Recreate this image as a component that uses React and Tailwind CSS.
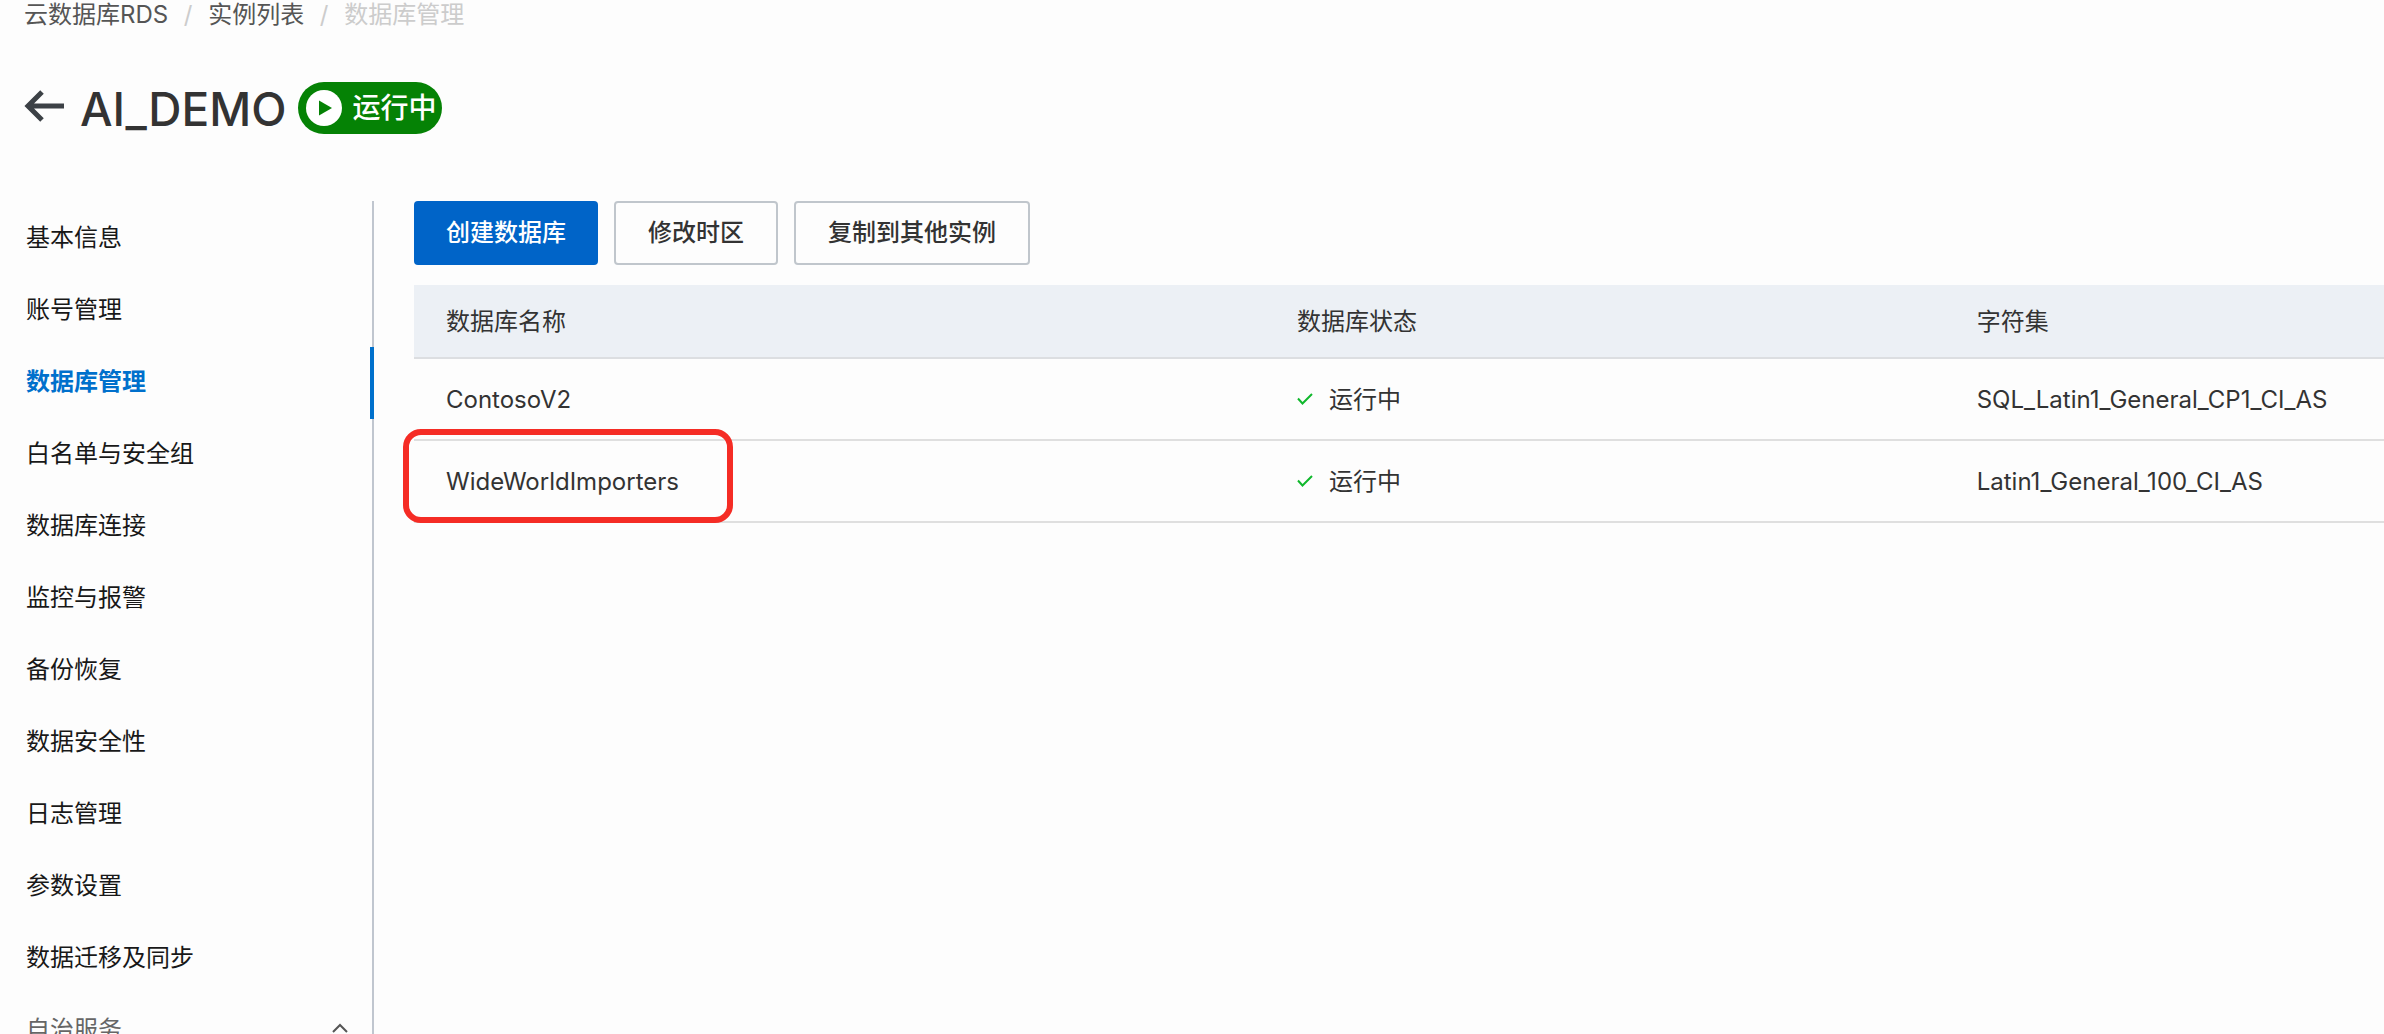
import { Fragment } from "react";

const breadcrumbs = ["云数据库RDS", "实例列表", "数据库管理"];

const menuItems = [
  "基本信息",
  "账号管理",
  "数据库管理",
  "白名单与安全组",
  "数据库连接",
  "监控与报警",
  "备份恢复",
  "数据安全性",
  "日志管理",
  "参数设置",
  "数据迁移及同步",
];

const databases = [
  { name: "ContosoV2", status: "运行中", charset: "SQL_Latin1_General_CP1_CI_AS" },
  {
    name: "WideWorldImporters",
    status: "运行中",
    charset: "Latin1_General_100_CI_AS",
    marked: true,
  },
];

function Breadcrumb() {
  return (
    <nav aria-label="breadcrumb" className="flex h-[30px] items-center px-6 text-[#555]">
      {breadcrumbs.map((label, index) => (
        <Fragment key={label}>
          {index > 0 && <span className="w-10 text-center text-[#ccc]">/</span>}
          {index < breadcrumbs.length - 1 ? (
            <a href="#">{label}</a>
          ) : (
            <span className="text-[#ccc]">{label}</span>
          )}
        </Fragment>
      ))}
    </nav>
  );
}

function InstanceHeader() {
  return (
    <header className="mt-[52px] flex h-[52px] items-center px-6">
      <button type="button" aria-label="返回" className="mr-4 flex h-9 w-10 items-start">
        <svg viewBox="0 0 40 32" className="h-8 w-10" fill="none" stroke="#3c4146" strokeWidth="5">
          <path d="M40 16H4M18 2L4 16l14 14" />
        </svg>
      </button>
      <h1 className="pt-0.5 text-[46px] leading-[52px] font-medium text-[#333]">AI_DEMO</h1>
      <span className="ml-3 flex h-[52px] items-center gap-2.5 rounded-full bg-[#058205] pr-1.5 pl-2 text-[28px] font-medium text-white">
        <svg viewBox="0 0 36 36" className="size-9">
          <circle cx="18" cy="18" r="18" fill="#fff" />
          <path d="M13 10.5L26 18L13 25.5z" fill="#058205" />
        </svg>
        运行中
      </span>
    </header>
  );
}

function SideMenu() {
  return (
    <aside className="w-[374px] shrink-0 border-r-2 border-[#c0c6cf] pt-0.5">
      {menuItems.map((label) =>
        label === "数据库管理" ? (
          <a
            key={label}
            href="#"
            className="-mr-0.5 flex h-[72px] items-center border-r-4 border-[#0070cc] pb-0.5 pl-[26px] font-semibold text-[#0070cc]"
          >
            {label}
          </a>
        ) : (
          <a
            key={label}
            href="#"
            className="flex h-[72px] items-center pb-0.5 pl-[26px] text-[#181818]"
          >
            {label}
          </a>
        )
      )}
      <button
        type="button"
        className="flex h-[72px] w-full items-center justify-between pr-6 pb-0.5 pl-[26px] text-[#666]"
      >
        自治服务
        <svg viewBox="0 0 16 14" className="h-3.5 w-4" fill="none" stroke="#555" strokeWidth="2">
          <path d="M1 9L8 2l7 7" />
        </svg>
      </button>
    </aside>
  );
}

function DatabaseTable() {
  return (
    <table className="mt-5 w-full table-fixed border-separate border-spacing-0 text-left text-[#333]">
      <thead>
        <tr className="h-[74px] bg-[#ecf0f5]">
          <th className="w-[43.2%] border-b-2 border-[#dcdee1] pt-0.5 pl-8 font-normal">数据库名称</th>
          <th className="w-[34.5%] border-b-2 border-[#dcdee1] pt-0.5 pl-8 font-normal">数据库状态</th>
          <th className="border-b-2 border-[#dcdee1] pt-0.5 pl-8 font-normal">字符集</th>
        </tr>
      </thead>
      <tbody>
        {databases.map((db) => (
          <tr key={db.name} className="h-[82px]">
            <td className="relative border-b-2 border-[#dfdfdf] pt-0.5 pl-8">
              {db.name}
              {db.marked && (
                <span className="absolute -top-3 -left-[11px] h-[94px] w-[330px] rounded-[18px] border-6 border-[#f52c25]" />
              )}
            </td>
            <td className="border-b-2 border-[#dfdfdf] pt-0.5 pl-8">
              <span className="flex items-center gap-4">
                <svg viewBox="0 0 16 14" className="h-3.5 w-4" fill="none" stroke="#10b82c" strokeWidth="2">
                  <path d="M1 5.5L5.5 10.5L15 1" />
                </svg>
                {db.status}
              </span>
            </td>
            <td className="border-b-2 border-[#dfdfdf] pt-0.5 pl-8">{db.charset}</td>
          </tr>
        ))}
      </tbody>
    </table>
  );
}

export default function App() {
  return (
    <div className="flex h-screen flex-col overflow-hidden bg-[#fdfdfd] font-['Inter','Noto_Sans_CJK_SC',sans-serif] text-[24px] leading-[36px]">
      <Breadcrumb />
      <InstanceHeader />
      <div className="mt-[67px] flex">
        <SideMenu />
        <main className="min-w-0 flex-1 pl-10">
          <div className="flex gap-4 font-medium text-[#333]">
            <button type="button" className="h-16 rounded-sm bg-[#0064c8] px-8 text-white">
              创建数据库
            </button>
            <button type="button" className="h-16 rounded-sm border-2 border-[#c0c6cc] px-8">
              修改时区
            </button>
            <button type="button" className="h-16 rounded-sm border-2 border-[#c0c6cc] px-8">
              复制到其他实例
            </button>
          </div>
          <DatabaseTable />
        </main>
      </div>
    </div>
  );
}
